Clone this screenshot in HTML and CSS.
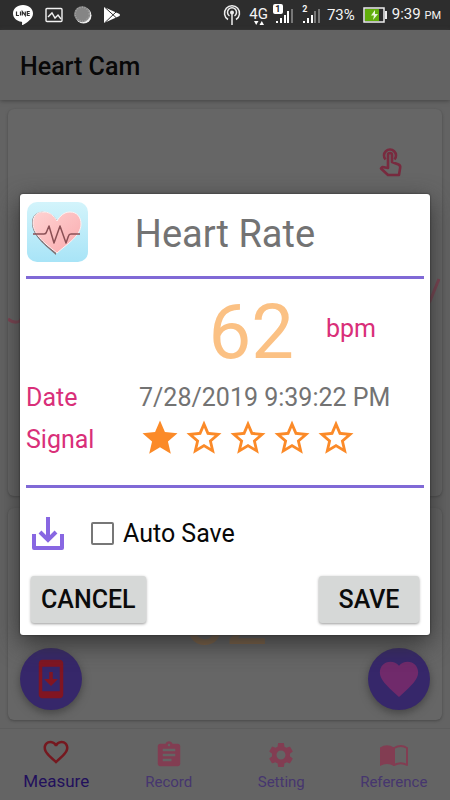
FILE: index.html
```html
<!DOCTYPE html>
<html lang="en">
<head>
<meta charset="utf-8">
<meta name="viewport" content="width=device-width, initial-scale=1">
<title>Heart Cam</title>
<link rel="stylesheet" href="styles.css">
</head>
<body>
<div class="status-bar">
  <div class="status-group notifications">
    <svg width="22" height="22" viewBox="0 0 22 22"><path fill="#fff" d="M11 1C5 1 1 4.700 1 9.500c0 4.300 3.500 7.500 8.500 8.300.8.200.7.700.5 2.800 0 .5.400.6.900.3C15 18.500 21 15 21 9.500 21 4.700 17 1 11 1z"/><path fill="none" stroke="#2d2d2d" stroke-width="1.200" d="M4.500 7.500v4h2.500M8.500 7.500v4M10.300 11.500v-4l3 4v-4M17.800 7.500h-2.500v4h2.500M15.300 9.500h2.300"/></svg>
    <svg width="18" height="16" viewBox="0 0 18 16"><g fill="none" stroke="#f2f2f2" stroke-width="1.400"><rect x="1" y="1.500" width="16" height="13" rx="1"/><path d="M3 10l4-4 3 5 3-3 3 4"/></g></svg>
    <svg width="18" height="18" viewBox="0 0 18 18"><circle cx="9.500" cy="9.500" r="8" fill="#f0f0f0"/><circle cx="8.200" cy="8.200" r="8" fill="#858585"/><circle cx="8.200" cy="8.200" r="7" fill="none" stroke="#a2a2a2" stroke-width="1.500" stroke-dasharray="1 1.500"/></svg>
    <svg width="18" height="18" viewBox="0 0 18 18"><path fill="#fff" d="M1 1v16l15.500-7q1-1 0-2z"/><path fill="none" stroke="#2d2d2d" stroke-width="1" d="M1.500 1l12 11M1.500 17L13.500 5.500"/></svg>
  </div>
  <div class="status-group system">
    <svg width="18" height="22" viewBox="0 0 18 22"><g fill="none" stroke="#eee" stroke-width="1.500"><path d="M5 15.500a7.500 7.500 0 1 1 8 0M6.500 12a4.500 4.500 0 1 1 5 0M9 9v12"/></g><circle cx="9" cy="8.500" r="2" fill="#eee"/></svg>
    <span class="network">4G<svg width="10" height="4" viewBox="0 0 10 4"><path fill="#fff" d="M0 0h4.500L2.200 4zM5.500 4H10L7.800 0z"/></svg></span>
    <span class="sim"><svg width="20" height="22" viewBox="0 0 20 22"><path fill="#fff" d="M3 17h2v2H3zM7 14h2v5H7zM11 11h2v8h-2zM14 7h2v12h-2z"/><path fill="#777" d="M18 5h2v14h-2z"/></svg><b class="sim-number active">1</b></span>
    <span class="sim"><svg width="20" height="22" viewBox="0 0 20 22"><path fill="#fff" d="M3 17h2v2H3zM7 14h2v5H7zM11 11h2v8h-2z"/><path fill="#777" d="M14 7h2v12h-2zM18 5h2v14h-2z"/></svg><b class="sim-number">2</b></span>
    <span>73%</span>
    <svg class="battery" width="24" height="16" viewBox="0 0 24 16"><rect x="1" y="1" width="20" height="14" fill="#2d2d2d" stroke="#eee" stroke-width="1.500"/><path fill="#61ad0b" d="M2 2h14v12H2z"/><path fill="#eee" d="M22 4h2v8h-2z"/><path fill="#e8f5d8" d="M12 3L8 8.500h3L10 13l5-6h-3z"/></svg>
    <span>9:39 <small class="meridiem">PM</small></span>
  </div>
</div>

<div class="app">
  <header class="app-bar"><h1 class="app-title">Heart Cam</h1></header>
  <main class="content">
    <section class="card chart-card">
      <svg class="touch-icon" width="32" height="32" viewBox="0 0 32 32"><g fill="none" stroke="#782b3f" stroke-width="2.600" stroke-linejoin="round"><path d="M11.500 13.500a6 6 0 1 1 9 0"/><path d="M14 22V9q0-2 2-2t2 2v7l6.500 2.500q2 1 1.700 3L25 29H14l-7-6.500 1.500-1.500z"/></g></svg>
      <svg class="trace" viewBox="0 0 434 60" preserveAspectRatio="none"><path fill="none" stroke="#804252" stroke-width="3" d="M0 49q6 5 12 2l20-35 50 30 60-40 70 45 80-40 70 35 50 0 10-15 9-22"/></svg>
    </section>
    <section class="card reading-card">
      <button class="fab" type="button" aria-label="Save to device"><svg width="42" height="42" viewBox="0 0 24 24"><path fill="#811522" d="M17 1H7c-1.100 0-2 .9-2 2v18c0 1.100.9 2 2 2h10c1.100 0 2-.9 2-2V3c0-1.100-.9-2-2-2zm0 18H7V5h10zM16 12h-3V8h-2v4H8l4 4z"/></svg></button>
      <span class="live-rate">62</span>
      <button class="fab" type="button" aria-label="Measure heart rate"><svg width="46" height="46" viewBox="0 0 24 24"><path fill="#702a6b" d="M12 21.350l-1.450-1.320C5.400 15.360 2 12.280 2 8.500 2 5.420 4.420 3 7.500 3c1.740 0 3.410.81 4.500 2.090C13.090 3.810 14.760 3 16.500 3 19.580 3 22 5.420 22 8.500c0 3.780-3.400 6.860-8.550 11.540z"/></svg></button>
    </section>
  </main>
  <nav class="tabs">
    <a class="tab current" href="#measure"><svg width="30" height="30" viewBox="0 0 24 24"><path fill="#75181f" d="M16.500 3c-1.740 0-3.410.81-4.500 2.090C10.910 3.810 9.240 3 7.500 3 4.420 3 2 5.420 2 8.500c0 3.780 3.400 6.860 8.550 11.540L12 21.350l1.450-1.320C18.600 15.360 22 12.280 22 8.500 22 5.420 19.580 3 16.500 3zm-4.400 15.550l-.1.1-.1-.1C7.140 14.240 4 11.390 4 8.500 4 6.500 5.500 5 7.500 5c1.540 0 3.040.99 3.570 2.360h1.870C13.460 5.990 14.960 5 16.500 5c2 0 3.500 1.500 3.500 3.500 0 2.890-3.140 5.740-7.900 10.050z"/></svg><span>Measure</span></a>
    <a class="tab" href="#record"><svg width="30" height="30" viewBox="0 0 24 24"><path fill="#823d52" d="M19 3h-4.180C14.400 1.840 13.300 1 12 1c-1.300 0-2.400.84-2.820 2H5c-1.100 0-2 .9-2 2v14c0 1.100.9 2 2 2h14c1.100 0 2-.9 2-2V5c0-1.100-.9-2-2-2zm-7 0c.55 0 1 .45 1 1s-.45 1-1 1-1-.45-1-1 .45-1 1-1zm2 14H7v-2h7v2zm3-4H7v-2h10v2zm0-4H7V7h10v2z"/></svg><span>Record</span></a>
    <a class="tab" href="#setting"><svg width="30" height="30" viewBox="0 0 24 24"><path fill="#823d52" d="M19.140 12.940c.04-.3.06-.61.06-.94 0-.32-.02-.64-.07-.94l2.030-1.580c.18-.14.23-.41.12-.61l-1.920-3.320c-.12-.22-.37-.29-.59-.22l-2.390.96c-.5-.38-1.030-.7-1.620-.94l-.36-2.540c-.04-.24-.24-.41-.48-.41h-3.840c-.24 0-.43.17-.47.41l-.36 2.540c-.59.24-1.130.57-1.620.94l-2.390-.96c-.22-.08-.47 0-.59.22L2.740 8.870c-.12.21-.08.47.12.61l2.030 1.580c-.05.3-.09.63-.09.94s.02.64.07.94l-2.030 1.580c-.18.14-.23.41-.12.61l1.920 3.320c.12.22.37.29.59.22l2.390-.96c.5.38 1.030.7 1.620.94l.36 2.540c.05.24.24.41.48.41h3.840c.24 0 .44-.17.47-.41l.36-2.540c.59-.24 1.130-.56 1.620-.94l2.390.96c.22.08.47 0 .59-.22l1.920-3.320c.12-.22.07-.47-.12-.61l-2.010-1.580zM12 15.600c-1.980 0-3.600-1.620-3.600-3.600s1.620-3.600 3.600-3.600 3.600 1.620 3.600 3.600-1.620 3.600-3.600 3.600z"/></svg><span>Setting</span></a>
    <a class="tab" href="#reference"><svg width="30" height="30" viewBox="0 0 30 30"><path fill="#823d52" d="M1 7.500Q8 3 15 7.500v18.500Q8 22 1 26z"/><path fill="none" stroke="#823d52" stroke-width="2" stroke-linejoin="round" d="M15 8q7-4 13 0v17q-6-3.500-13 0z"/></svg><span>Reference</span></a>
  </nav>
</div>

<div class="overlay">
  <form class="dialog" role="dialog" aria-labelledby="dialog-title">
    <div class="dialog-header">
      <svg class="app-icon" width="61" height="61" viewBox="0 0 61 61">
        <defs>
          <linearGradient id="sky" x1="0" y1="0" x2="0" y2="1"><stop offset="0" stop-color="#d3f4fb"/><stop offset="1" stop-color="#a8e4f7"/></linearGradient>
          <linearGradient id="rose" x1="0" y1="0" x2="1" y2="1"><stop offset="0" stop-color="#ffd3d2"/><stop offset="1" stop-color="#f9aaae"/></linearGradient>
        </defs>
        <rect width="61" height="60" rx="10" fill="url(#sky)"/>
        <path fill="#7d7074" d="M29 53C19 44 5 34 5 21 5 13 11 9 17 10c6 0 10 4 13 8z"/>
        <path fill="url(#rose)" stroke="#fff1f1" stroke-width="1" d="M30 51C20 43 6 33 6 21 6 13 11 9.500 17 10c6 0 10 4 13 9 3-5 7-9 13-9 7 0 11 5 11 12 0 12-14 20-24 29z"/>
        <path fill="none" stroke="#8b5055" stroke-width="1.500" stroke-linejoin="round" d="M6 32h11q2 0 2.500-2l2.500-6 5 17 6-17 6 17 2.500-7q.5-2 2.500-2h9"/>
      </svg>
      <h2 class="dialog-title" id="dialog-title">Heart Rate</h2>
    </div>
    <hr class="rule">
    <div class="rate"><span class="rate-value">62</span><span class="rate-unit">bpm</span></div>
    <dl class="details">
      <dt>Date</dt><dd>7/28/2019 9:39:22 PM</dd>
      <dt>Signal</dt>
      <dd class="stars" role="img" aria-label="1 of 5 stars">
        <svg viewBox="0 0 24 24"><path d="M12 17.270L18.180 21l-1.640-7.030L22 9.240l-7.190-.61L12 2 9.190 8.630 2 9.240l5.460 4.730L5.820 21z"/></svg>
        <svg viewBox="0 0 24 24"><path d="M22 9.240l-7.190-.62L12 2 9.190 8.630 2 9.240l5.460 4.730L5.820 21 12 17.270 18.180 21l-1.630-7.030zM12 15.400l-3.760 2.270 1-4.280-3.320-2.880 4.380-.38L12 6.100l1.710 4.040 4.380.38-3.320 2.880 1 4.280z"/></svg>
        <svg viewBox="0 0 24 24"><path d="M22 9.240l-7.190-.62L12 2 9.190 8.630 2 9.240l5.460 4.730L5.820 21 12 17.270 18.180 21l-1.630-7.030zM12 15.400l-3.760 2.270 1-4.280-3.320-2.880 4.380-.38L12 6.100l1.710 4.040 4.380.38-3.320 2.880 1 4.280z"/></svg>
        <svg viewBox="0 0 24 24"><path d="M22 9.240l-7.190-.62L12 2 9.190 8.630 2 9.240l5.460 4.730L5.820 21 12 17.270 18.180 21l-1.630-7.030zM12 15.400l-3.760 2.270 1-4.280-3.320-2.880 4.380-.38L12 6.100l1.710 4.040 4.380.38-3.320 2.880 1 4.280z"/></svg>
        <svg viewBox="0 0 24 24"><path d="M22 9.240l-7.190-.62L12 2 9.190 8.630 2 9.240l5.460 4.730L5.820 21 12 17.270 18.180 21l-1.630-7.030zM12 15.400l-3.760 2.270 1-4.280-3.320-2.880 4.380-.38L12 6.100l1.710 4.040 4.380.38-3.320 2.880 1 4.280z"/></svg>
      </dd>
    </dl>
    <hr class="rule">
    <div class="options">
      <svg width="34" height="34" viewBox="0 0 34 34"><g fill="none" stroke="#8867e2" stroke-width="4"><path d="M17 0v23M9 15l8 8 8-8"/><path stroke-linejoin="round" d="M3 17v14h28V17"/></g></svg>
      <label class="auto-save"><input class="checkbox" type="checkbox">Auto Save</label>
    </div>
    <div class="actions">
      <button class="button" type="button">CANCEL</button>
      <button class="button" type="button">SAVE</button>
    </div>
  </form>
</div>
</body>
</html>
```
FILE: styles.css
```css
* { box-sizing: border-box; }

body {
  margin: 0;
  min-height: 100vh;
  display: flex;
  flex-direction: column;
  background: #636363;
  font-family: Roboto, "Liberation Sans", sans-serif;
}

svg { display: block; flex: none; }
h1, h2, dl, dd { margin: 0; }
button { border: 0; padding: 0; font-family: inherit; }

.status-bar {
  display: flex;
  justify-content: space-between;
  height: 30px;
  padding: 0 9px 0 12px;
  background: #2d2d2d;
  color: #f4f4f4;
  font-size: 15px;
  line-height: 30px;
  white-space: nowrap;
}
.status-group { display: flex; align-items: center; }
.notifications { gap: 11px; }
.system { gap: 5px; }
.network { position: relative; margin-left: 3px; line-height: 28px; align-self: flex-start; }
.network svg { position: absolute; left: 5px; top: 21px; }
.sim { position: relative; margin-right: 2px; }
.sim-number {
  position: absolute;
  left: 0;
  top: 0;
  width: 10px;
  font-size: 9px;
  line-height: 10px;
  text-align: center;
}
.sim-number.active { background: #fff; color: #222; border-radius: 2px; }
.battery { margin-left: 3px; }
.meridiem { font-size: 11px; }

.app { flex: 1; display: flex; flex-direction: column; }
.app-bar {
  display: flex;
  align-items: center;
  height: 70px;
  padding: 4px 20px 0;
  background: #636363;
  box-shadow: 0 1px 4px #444;
}
.app-title { font-size: 25px; line-height: 30px; font-weight: 500; color: #080808; }

.content { flex: 1; display: flex; flex-direction: column; gap: 12px; padding: 9px 8px 8px; }
.card { background: #666; border-radius: 6px; box-shadow: 0 1px 3px #484848; }
.chart-card { flex: 1; padding-top: 37px; }
.touch-icon { margin: 0 36px 0 auto; }
.trace { width: 100%; height: 60px; margin-top: 92px; }
.reading-card {
  display: flex;
  align-items: flex-end;
  justify-content: space-between;
  height: 212px;
  padding: 0 12px 10px;
}
.fab {
  display: grid;
  place-items: center;
  width: 62px;
  height: 62px;
  border-radius: 50%;
  background: #36276a;
  box-shadow: 0 3px 8px #444;
}
.live-rate { margin-bottom: 48px; font-size: 76px; line-height: 88px; color: #8a6640; }

.tabs {
  display: grid;
  grid-template-columns: repeat(4, 1fr);
  height: 72px;
  border-top: 1px solid #5d5d5d;
  background: #646464;
}
.tab {
  display: flex;
  flex-direction: column;
  align-items: center;
  padding-top: 11px;
  color: #46366f;
  font-size: 15px;
  line-height: 24px;
  text-decoration: none;
}
.tab.current { padding-top: 8px; color: #22105c; font-size: 17px; line-height: 28px; }

.overlay {
  position: absolute;
  inset: 30px 0 0;
  display: flex;
  align-items: center;
  padding: 0 20px 1px;
}
.dialog {
  width: 100%;
  padding: 8px 6px 12px;
  border-radius: 3px;
  background: #fff;
  box-shadow: 0 0 2px #222, 0 8px 24px #333;
}
.dialog-header {
  display: grid;
  grid-template-columns: 61px 1fr 61px;
  align-items: center;
  padding: 0 1px;
  margin-bottom: 13px;
}
.dialog-title { padding-top: 2px; font-size: 38px; line-height: 46px; font-weight: 400; text-align: center; color: #737373; }
.rule { height: 3px; margin: 0; border: 0; background: #8069d6; }

.rate {
  display: flex;
  align-items: center;
  justify-content: flex-end;
  gap: 32px;
  height: 98px;
  padding: 8px 48px 0 0;
}
.rate-value { font-size: 76px; line-height: 90px; color: #fbc184; }
.rate-unit { padding-bottom: 6px; font-size: 25px; line-height: 30px; color: #d92f79; }

.details {
  display: grid;
  grid-template-columns: 113px 1fr;
  grid-auto-rows: 42px;
  align-items: center;
  padding-bottom: 24px;
  font-size: 25px;
  line-height: 30px;
  white-space: nowrap;
  color: #737373;
}
.details dt { color: #d92f79; }
.stars { display: flex; gap: 2px; padding-bottom: 4px; }
.stars svg { width: 42px; height: 42px; fill: #fb8a28; }

.options { display: flex; align-items: center; gap: 26px; height: 88px; padding: 3px 5px 0; }
.auto-save { display: flex; align-items: center; gap: 9px; font-size: 25px; line-height: 30px; color: #080808; }
.checkbox {
  appearance: none;
  width: 23px;
  height: 23px;
  margin: 0;
  border: 2px solid #777;
  border-radius: 2px;
}
.actions { display: flex; justify-content: space-between; padding: 0 5px; }
.button {
  min-width: 100px;
  height: 47px;
  padding: 0 10px;
  border-radius: 3px;
  background: #d6d8d7;
  box-shadow: 0 1px 3px #999;
  color: #0b0b0b;
  font-size: 25px;
  font-weight: 500;
}
```
